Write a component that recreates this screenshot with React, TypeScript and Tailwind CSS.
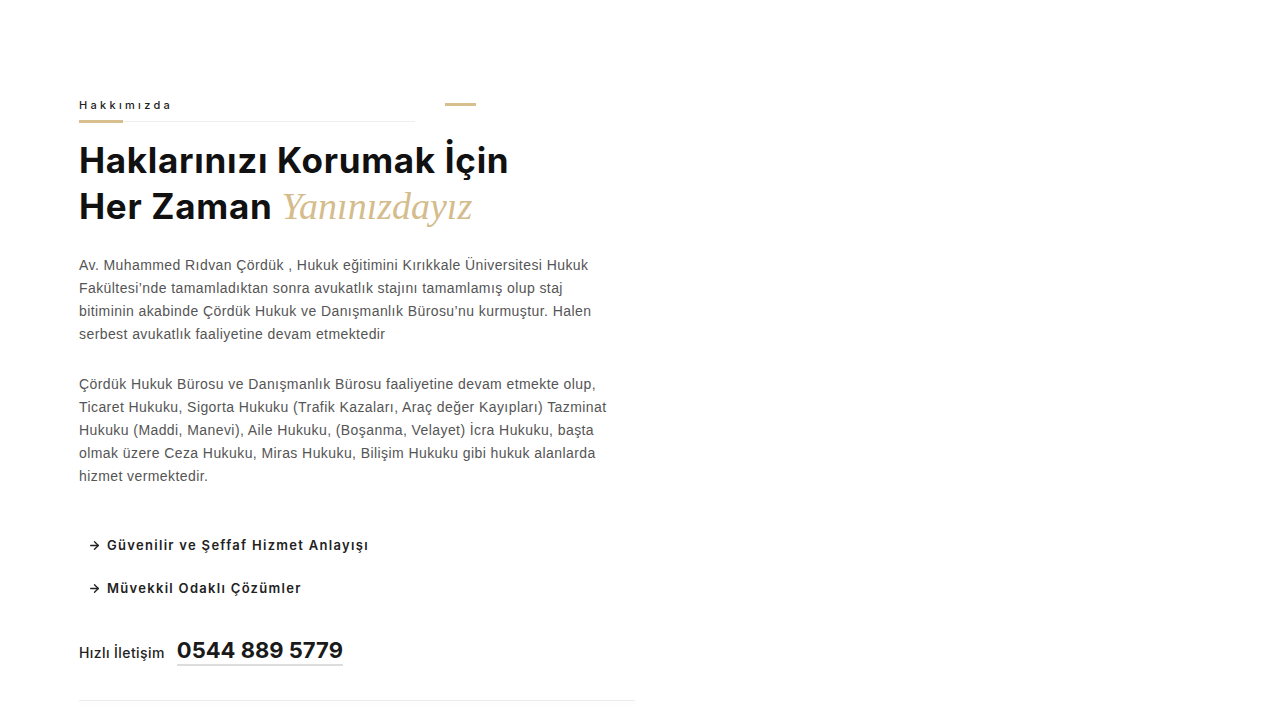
import { ArrowRight } from 'lucide-react'

const sans = { fontFamily: 'Inter, "Noto Sans", sans-serif' }

function SectionLabel() {
  return (
    <div className="relative w-[400px]">
      <span
        className="block text-[11px] font-medium tracking-[0.3em] text-[#222]"
        style={sans}
      >
        Hakkımızda
      </span>
      <div className="mt-[6px] flex items-center">
        <div className="h-[3px] w-[44px] bg-[#d8c08e]" />
        <div className="h-px w-[292px] bg-[#eeeeee]" />
      </div>
      <div className="absolute left-[366px] top-[6px] h-[3px] w-[31px] bg-[#d8c08e]" />
    </div>
  )
}

const features = ['Güvenilir ve Şeffaf Hizmet Anlayışı', 'Müvekkil Odaklı Çözümler']

export default function App() {
  return (
    <div className="h-screen overflow-y-scroll bg-white font-['Liberation_Sans',Arial,sans-serif]">
      <section className="min-h-[2960px] w-[556px] pl-[79px] pt-[97px] box-content">
        <SectionLabel />

        <h2
          className="mt-[14px] text-[35px] font-bold leading-[46px] tracking-[0.02em] text-[#111]"
          style={sans}
        >
          Haklarınızı Korumak İçin
          <br />
          Her Zaman{' '}
          <span className="font-['Liberation_Serif',serif] text-[38px] font-normal italic tracking-normal text-[#d4bc8c]">
            Yanınızdayız
          </span>
        </h2>

        <p className="mt-[25px] w-[580px] text-[14px] leading-[23px] tracking-[0.03em] text-[#555]">
          Av. Muhammed Rıdvan Çördük , Hukuk eğitimini Kırıkkale Üniversitesi Hukuk
          <br />
          Fakültesi’nde tamamladıktan sonra avukatlık stajını tamamlamış olup staj
          <br />
          bitiminin akabinde Çördük Hukuk ve Danışmanlık Bürosu’nu kurmuştur. Halen
          <br />
          serbest avukatlık faaliyetine devam etmektedir
        </p>

        <p className="mt-[27px] w-[580px] text-[14px] leading-[23px] tracking-[0.03em] text-[#555]">
          Çördük Hukuk Bürosu ve Danışmanlık Bürosu faaliyetine devam etmekte olup,
          <br />
          Ticaret Hukuku, Sigorta Hukuku (Trafik Kazaları, Araç değer Kayıpları) Tazminat
          <br />
          Hukuku (Maddi, Manevi), Aile Hukuku, (Boşanma, Velayet) İcra Hukuku, başta
          <br />
          olmak üzere Ceza Hukuku, Miras Hukuku, Bilişim Hukuku gibi hukuk alanlarda
          <br />
          hizmet vermektedir.
        </p>

        <ul className="mt-[49px] flex flex-col gap-[26px] pl-[9px]">
          {features.map(f => (
            <li key={f} className="flex items-center gap-[6px]">
              <ArrowRight className="h-[13px] w-[13px] text-[#222]" strokeWidth={2.5} />
              <span
                className="text-[13px] font-semibold leading-[17px] tracking-[0.1em] text-[#222]"
                style={sans}
              >
                {f}
              </span>
            </li>
          ))}
        </ul>

        <div className="mt-[39px] flex items-end gap-[12px]">
          <span className="pb-[3px] text-[14px] font-medium tracking-[0.03em] text-[#222]" style={sans}>
            Hızlı İletişim
          </span>
          <a
            href="#"
            className="border-b-2 border-[#dddddd] text-[22px] font-bold leading-[28px] text-[#1a1a1a]"
            style={sans}
          >
            0544 889 5779
          </a>
        </div>

        <div className="mt-[34px] h-px w-[556px] bg-[#ececec] shadow-[0_2px_4px_rgba(0,0,0,0.06)]" />
      </section>
    </div>
  )
}
